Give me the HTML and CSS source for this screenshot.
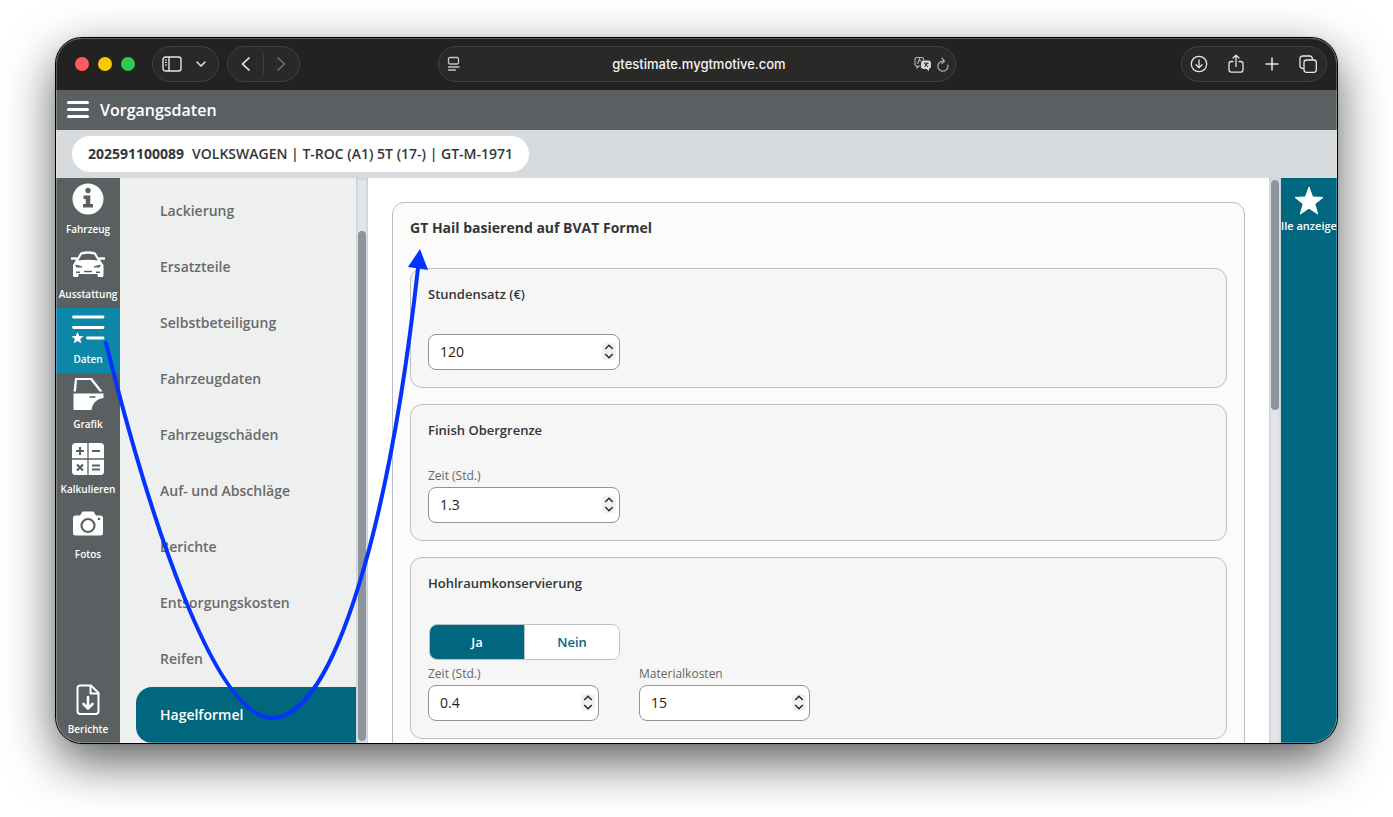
FILE: index.html
```html
<!DOCTYPE html>
<html lang="de">
<head>
  <meta charset="UTF-8">
  <meta name="viewport" content="width=device-width, initial-scale=1.0">
  <title>Vorgangsdaten</title>
  <link rel="stylesheet" href="styles.css">
</head>
<body>
  <div class="window">
    <div class="toolbar">
      <div class="toolbar-left">
        <div class="lights">
          <span class="light red"></span>
          <span class="light yellow"></span>
          <span class="light green"></span>
        </div>
        <div class="pill pill-sidebar">
          <button aria-label="Seitenleiste">
            <svg width="20" height="16" viewBox="0 0 20 16" fill="none" stroke="#e6e6e6" stroke-width="1.4"><rect x="1" y="1" width="18" height="14" rx="2.5"/><path d="M7 1v14"/><path d="M3 4h2M3 6.5h2M3 9h2" stroke-width="1"/></svg>
          </button>
          <button aria-label="Tabgruppen">
            <svg width="10" height="6" viewBox="0 0 10 6" fill="none" stroke="#e6e6e6" stroke-width="1.5" stroke-linecap="round" stroke-linejoin="round"><path d="M1 1l4 4 4-4"/></svg>
          </button>
        </div>
        <div class="pill pill-nav">
          <button aria-label="Zurück">
            <svg width="9" height="14" viewBox="0 0 9 14" fill="none" stroke="#f2f2f2" stroke-width="1.7" stroke-linecap="round" stroke-linejoin="round"><path d="M8 1L1.500 7 8 13"/></svg>
          </button>
          <span class="divider"></span>
          <button aria-label="Vor">
            <svg width="9" height="14" viewBox="0 0 9 14" fill="none" stroke="#6d6d6b" stroke-width="1.7" stroke-linecap="round" stroke-linejoin="round"><path d="M1 1l6.500 6L1 13"/></svg>
          </button>
        </div>
      </div>
      <div class="pill address">
        <svg width="14" height="16" viewBox="0 0 14 16" fill="none" stroke="#c8c8c8" stroke-width="1.3" stroke-linecap="round"><rect x="1.500" y="1.500" width="10" height="6.500" rx="1.500"/><path d="M1.500 11h10.500M1.500 14h7"/></svg>
        <span class="url">gtestimate.mygtmotive.com</span>
        <div class="address-icons">
          <svg width="18" height="16" viewBox="0 0 18 16"><path d="M2.500 1.500h5.500a1.500 1.500 0 0 1 1.500 1.500v1.500M6.500 10H5l-2 2v-2h-.5A1.500 1.500 0 0 1 1 8.500V3a1.500 1.500 0 0 1 1.500-1.500M3.500 8l2-5 1 2.300" fill="none" stroke="#b5b5b5" stroke-width="1.100"/><path d="M9.500 4.500h5A2.500 2.500 0 0 1 17 7v3.500a2.500 2.500 0 0 1-2 2.400v2.300L12.500 13h-3A2.500 2.500 0 0 1 7 10.500V7a2.500 2.500 0 0 1 2.500-2.500z" fill="#d5d5d5"/><path d="M10 7.200h4.500M10.500 11l3.500-4M10.500 7.500l3.500 3.500" fill="none" stroke="#292927" stroke-width="1"/></svg>
          <svg width="12" height="15" viewBox="0 0 12 15" fill="none" stroke="#a9a9a7" stroke-width="1.300" stroke-linecap="round" stroke-linejoin="round"><path d="M10.800 8.200A5 5 0 1 1 6 4.200h1M5 1.200l2.500 3L4.800 6.500"/></svg>
        </div>
      </div>
      <div class="toolbar-right">
        <div class="pill pill-actions">
          <button aria-label="Downloads">
            <svg width="18" height="18" viewBox="0 0 18 18" fill="none" stroke="#e6e6e6" stroke-width="1.300" stroke-linecap="round" stroke-linejoin="round"><circle cx="9" cy="9" r="7.700"/><path d="M9 5v7.500M6 9.800l3 2.900 3-2.900"/></svg>
          </button>
          <button aria-label="Teilen">
            <svg width="16" height="20" viewBox="0 0 16 20" fill="none" stroke="#e6e6e6" stroke-width="1.300" stroke-linecap="round" stroke-linejoin="round"><path d="M5 7.500H3.300A2.300 2.300 0 0 0 1 9.800v6A2.300 2.300 0 0 0 3.300 18.100h9.400a2.300 2.300 0 0 0 2.300-2.300v-6a2.300 2.300 0 0 0-2.300-2.300H11M8 12.500V1.200M5 4l3-2.900L11 4"/></svg>
          </button>
          <button aria-label="Neuer Tab">
            <svg width="14" height="14" viewBox="0 0 14 14" stroke="#e6e6e6" stroke-width="1.500" stroke-linecap="round"><path d="M7 1v12M1 7h12"/></svg>
          </button>
          <button aria-label="Tabübersicht">
            <svg width="18" height="18" viewBox="0 0 18 18" fill="none" stroke="#e6e6e6" stroke-width="1.300"><rect x="5" y="5" width="12.300" height="12.300" rx="2.500"/><path d="M5 13.300H3.500A2.500 2.500 0 0 1 1 10.800V3.500A2.500 2.500 0 0 1 3.500 1h7.300a2.500 2.500 0 0 1 2.500 2.500V5"/></svg>
          </button>
        </div>
      </div>
    </div>

    <header class="app-header">
      <button class="menu-btn" aria-label="Menü"><span></span><span></span><span></span></button>
      <h1>Vorgangsdaten</h1>
    </header>

    <div class="case-bar">
      <div class="case-pill"><strong>202591100089</strong><span>VOLKSWAGEN | T-ROC (A1) 5T (17-) | GT-M-1971</span></div>
    </div>

    <div class="layout">
      <nav class="rail">
        <a href="#">
          <svg width="32" height="32" viewBox="0 0 32 32"><circle cx="16" cy="16" r="15.500" fill="#fff"/><g fill="#5a6062"><circle cx="16" cy="7.500" r="2.700"/><path d="M11.500 12.500h6.800v8.500h2.700v3.500H11V21h2.700v-5h-2.200z"/></g></svg>
          Fahrzeug
        </a>
        <a href="#">
          <svg width="34" height="32" viewBox="0 0 34 32"><path d="M9.500 4.500Q17 2 24.500 4.500L29 12l3.500 5v10.500q0 1.500-1.500 1.500h-3q-1.500 0-1.500-1.500V26h-19v1.500Q7.500 29 6 29H3.500Q2 29 2 27.500V17l3-5z" fill="#fff"/><path d="M1 10.500h4M33 10.500h-4" stroke="#fff" stroke-width="2.600" stroke-linecap="round"/><g fill="#5a6062"><path d="M10.800 6.500q6.200-1.300 12.400 0l3.600 6Q17 10.800 7.200 12.500z"/><path d="M4 16.500l7 1.700v1.300H5.500zM30 16.500l-7 1.700v1.300h5.500zM13 22.700h8v1.500h-8zM5 23.500h4V25H5zM25 23.500h4V25h-4z"/></g></svg>
          Ausstattung
        </a>
        <a href="#" class="active">
          <svg width="34" height="32" viewBox="0 0 34 32"><path d="M2.500 4h29.500M2.500 14.500h29.500M16.500 25h15.500" stroke="#fff" stroke-width="2.800" stroke-linecap="round"/><path d="M6.500 19l1.700 4 4.300.3-3.300 2.800 1.100 4.200-3.800-2.300-3.800 2.300 1.100-4.200L.5 23.300l4.300-.3z" fill="#fff"/></svg>
          Daten
        </a>
        <a href="#">
          <svg width="32" height="34" viewBox="0 0 32 34"><path d="M3 0h17l10.500 13.500h-3L18.500 2H5L4 13.500H1.500z" fill="#fff"/><path d="M1.500 15.500h30V20c-7 1-11 5-12 12h-18z" fill="#fff"/><path d="M17.500 19h6" stroke="#5a6062" stroke-width="1.500"/></svg>
          Grafik
        </a>
        <a href="#">
          <svg width="34" height="34" viewBox="0 0 34 34"><rect x="1" y="0" width="32" height="32" rx="3.500" fill="#fff"/><path d="M17 0v32M1 16h32" stroke="#5a6062" stroke-width="1.300"/><path d="M9 4v8M5 8h8M21 8h8M21 22.500h8M21 26.500h8M6 21.500l6 6M12 21.500l-6 6" stroke="#5a6062" stroke-width="2.200"/></svg>
          Kalkulieren
        </a>
        <a href="#">
          <svg width="32" height="32" viewBox="0 0 32 32"><path d="M3.500 7.500H8l2.500-4h11l2.500 4h4.500Q31 7.500 31 10v15q0 2.500-2.500 2.500h-25Q1 27.500 1 25V10Q1 7.500 3.500 7.500z" fill="#fff"/><circle cx="16" cy="17.500" r="6.500" fill="none" stroke="#5a6062" stroke-width="2.200"/><circle cx="27" cy="11" r="1.300" fill="#5a6062"/></svg>
          Fotos
        </a>
        <a href="#" class="rail-bottom">
          <svg width="32" height="32" viewBox="0 0 32 32" fill="none" stroke="#fff" stroke-width="2" stroke-linecap="round" stroke-linejoin="round"><path d="M8 2.500h11l7.500 7.500v18q0 3-3 3h-15q-3 0-3-3V5q0-2.500 2.500-2.500z"/><path d="M18.500 3v7.500H26"/><path d="M16 14v11M11.500 21l4.500 4.500 4.500-4.500" stroke-width="2.600"/></svg>
          Berichte
        </a>
      </nav>

      <nav class="sections">
        <a href="#">Lackierung</a>
        <a href="#">Ersatzteile</a>
        <a href="#">Selbstbeteiligung</a>
        <a href="#">Fahrzeugdaten</a>
        <a href="#">Fahrzeugschäden</a>
        <a href="#">Auf- und Abschläge</a>
        <a href="#">Berichte</a>
        <a href="#">Entsorgungskosten</a>
        <a href="#">Reifen</a>
        <a href="#" class="active">Hagelformel</a>
      </nav>
      <div class="scrollbar scroll-end"><div class="thumb thumb-sections"></div></div>

      <main class="content">
        <section class="card">
          <h2>GT Hail basierend auf BVAT Formel</h2>

          <div class="box">
            <h3>Stundensatz (€)</h3>
            <div class="field">
              <input type="number" id="rate" value="120" aria-label="Stundensatz (€)">
              <svg class="stepper" width="14" height="17" viewBox="0 0 14 17"><rect width="14" height="17" rx="4" fill="#f1f1f1"/><path d="M3.200 6L7 2.200 10.800 6M3.200 11L7 14.800 10.800 11" fill="none" stroke="#2b2b2b" stroke-width="1.500"/></svg>
            </div>
          </div>

          <div class="box">
            <h3>Finish Obergrenze</h3>
            <label for="finish-time">Zeit (Std.)</label>
            <div class="field">
              <input type="number" id="finish-time" value="1.3" step="0.1">
              <svg class="stepper" width="14" height="17" viewBox="0 0 14 17"><rect width="14" height="17" rx="4" fill="#f1f1f1"/><path d="M3.200 6L7 2.200 10.800 6M3.200 11L7 14.800 10.800 11" fill="none" stroke="#2b2b2b" stroke-width="1.500"/></svg>
            </div>
          </div>

          <div class="box">
            <h3>Hohlraumkonservierung</h3>
            <div class="toggle">
              <button class="on">Ja</button>
              <button>Nein</button>
            </div>
            <div class="row">
              <div class="col">
                <label for="cavity-time">Zeit (Std.)</label>
                <div class="field">
                  <input type="number" id="cavity-time" value="0.4" step="0.1">
                  <svg class="stepper" width="14" height="17" viewBox="0 0 14 17"><rect width="14" height="17" rx="4" fill="#f1f1f1"/><path d="M3.200 6L7 2.200 10.800 6M3.200 11L7 14.800 10.800 11" fill="none" stroke="#2b2b2b" stroke-width="1.500"/></svg>
                </div>
              </div>
              <div class="col">
                <label for="material">Materialkosten</label>
                <div class="field">
                  <input type="number" id="material" value="15">
                  <svg class="stepper" width="14" height="17" viewBox="0 0 14 17"><rect width="14" height="17" rx="4" fill="#f1f1f1"/><path d="M3.200 6L7 2.200 10.800 6M3.200 11L7 14.800 10.800 11" fill="none" stroke="#2b2b2b" stroke-width="1.500"/></svg>
                </div>
              </div>
            </div>
          </div>
        </section>
      </main>
      <div class="scrollbar"><div class="thumb thumb-content"></div></div>

      <aside class="favorites">
        <a href="#">
          <svg width="30" height="30" viewBox="0 0 30 30"><path d="M15 1l3.600 10 10.400.4-8.200 6.500L23.700 28 15 22.200 6.300 28l2.900-10.100L1 11.400 11.400 11z" fill="#fff" stroke="#fff" stroke-linejoin="round"/></svg>
          <span>lle anzeige</span>
        </a>
      </aside>
    </div>

    <!-- arrow from "Daten" to the card title -->
    <svg class="arrow"><path d="M50 305C94 482 159 680 216 680C279 680 334 482 362 230" fill="none" stroke="#0433ff" stroke-width="4" stroke-linecap="round"/><path d="M364 211l8 21-20-3z" fill="#0433ff"/></svg>
  </div>
</body>
</html>
```
FILE: styles.css
```css
* {
  box-sizing: border-box;
}

body {
  margin: 0;
  padding: 38px 56px 74px;
  height: 100vh;
  background: #fff;
  font-family: "Open Sans", "Noto Sans", sans-serif;
  color: #333638;
  overflow: hidden;
}

button {
  font-family: inherit;
  cursor: pointer;
}

a {
  text-decoration: none;
}

.window {
  position: relative;
  display: flex;
  flex-direction: column;
  height: 100%;
  border-radius: 26px;
  box-shadow: 0 0 0 1px #000, 0 0 3px rgba(0, 0, 0, 0.3), 0 18px 50px rgba(0, 0, 0, 0.65);
  overflow: hidden;
}

.window::after {
  content: "";
  position: absolute;
  inset: 0;
  border: 1px solid rgba(255, 255, 255, 0.25);
  border-radius: 26px;
  pointer-events: none;
}

/* browser toolbar */
.toolbar {
  display: grid;
  grid-template-columns: 1fr 518px 1fr;
  align-items: center;
  flex: none;
  height: 52px;
  padding: 0 10px 0 19px;
  background: #222220;
}

.toolbar-left {
  display: flex;
  align-items: center;
}

.toolbar-right {
  display: flex;
  justify-content: flex-end;
}

.lights {
  display: flex;
  gap: 9px;
  margin-right: 17px;
}

.light {
  width: 14px;
  height: 14px;
  border-radius: 50%;
}

.red { background: #ff5a5f; }
.yellow { background: #fdc800; }
.green { background: #33c758; }

.pill {
  display: flex;
  align-items: center;
  height: 36px;
  border: 1px solid #40403e;
  border-radius: 18px;
  background: #292927;
}

.pill button {
  display: flex;
  padding: 0;
  border: none;
  background: none;
}

.pill-sidebar {
  width: 67px;
  padding: 0 12px 0 9px;
  justify-content: space-between;
  margin-right: 8px;
}

.pill-nav {
  width: 73px;
  padding: 0 13px;
  justify-content: space-between;
}

.divider {
  width: 1px;
  height: 20px;
  background: #40403e;
}

.address {
  justify-content: space-between;
  padding: 0 6px 0 8px;
  margin-left: -4px;
  margin-right: 4px;
}

.url {
  margin-left: 23px;
  font-family: Inter, sans-serif;
  font-size: 13px;
  font-weight: 500;
  color: #f4f4f4;
}

.address-icons {
  display: flex;
  align-items: center;
  gap: 5px;
}

.pill-actions {
  width: 146px;
  padding: 0 9px 0 8px;
  justify-content: space-between;
}

/* app header */
.app-header {
  display: flex;
  align-items: center;
  flex: none;
  gap: 11px;
  height: 40px;
  padding: 0 11px 1px;
  background: #5a6062;
}

.menu-btn {
  display: flex;
  flex-direction: column;
  gap: 4px;
  width: 22px;
  padding: 0;
  border: none;
  background: none;
}

.menu-btn span {
  height: 3px;
  border-radius: 2px;
  background: #fff;
}

h1 {
  margin: 0;
  font-size: 16px;
  font-weight: 600;
  color: #fff;
}

.case-bar {
  display: flex;
  align-items: center;
  flex: none;
  height: 48px;
  padding: 0 16px;
  background: #d7dbde;
}

.case-pill {
  display: flex;
  align-items: center;
  gap: 8px;
  height: 36px;
  padding: 0 16px 2px;
  border-radius: 18px;
  background: #fff;
  font-size: 14px;
  font-weight: 600;
}

.case-pill strong {
  font-weight: 700;
}

.layout {
  display: flex;
  flex: 1;
  min-height: 0;
}

/* icon rail */
.rail {
  display: flex;
  flex-direction: column;
  flex: none;
  width: 64px;
  background: #5a6062;
}

.rail a {
  display: flex;
  flex-direction: column;
  align-items: center;
  justify-content: space-between;
  height: 65px;
  padding: 5px 0 6px;
  font-size: 10px;
  font-weight: 600;
  line-height: 16px;
  color: #fff;
}

.rail a.active {
  background: #0d87a8;
}

.rail .rail-bottom {
  margin-top: auto;
}

/* section list */
.sections {
  display: flex;
  flex-direction: column;
  justify-content: flex-end;
  flex: none;
  width: 236px;
  padding-left: 16px;
  background: #eef0f0;
  overflow: hidden;
}

.sections a {
  flex: none;
  height: 56px;
  padding-left: 24px;
  font-size: 14px;
  font-weight: 600;
  line-height: 56px;
  color: #6a6a6a;
}

.sections a.active {
  border-radius: 16px 0 0 16px;
  background: #00677f;
  color: #fff;
}

.scrollbar {
  display: flex;
  flex-direction: column;
  flex: none;
  width: 12px;
  padding: 2px;
  background: #e3e6e9;
  box-shadow: inset 0 0 3px #a9aeb3;
}

.scroll-end {
  justify-content: flex-end;
}

.thumb {
  border-radius: 4px;
  background: #8d949b;
}

.thumb-sections {
  height: 91%;
}

.thumb-content {
  height: 41%;
}

/* form */
.content {
  flex: 1;
  min-width: 0;
  padding: 24px;
  background: #fff;
  overflow: hidden;
}

.card {
  padding: 17px;
  border: 1px solid #b7bfc6;
  border-radius: 12px;
  background: #fbfbfb;
}

h2 {
  margin: 0 0 32px;
  font-size: 14px;
  font-weight: 700;
  line-height: 16px;
}

.box {
  margin-bottom: 16px;
  padding: 17px;
  border: 1px solid #b7bfc6;
  border-radius: 12px;
  background: #f6f6f6;
}

h3 {
  margin: 0 0 32px;
  font-size: 13px;
  font-weight: 600;
  line-height: 16px;
}

label {
  display: block;
  margin-bottom: 5px;
  font-size: 12px;
  line-height: 12px;
  color: #666;
}

.field {
  position: relative;
  width: 192px;
}

.field input {
  display: block;
  width: 100%;
  height: 36px;
  padding: 0 11px 2px;
  border: 1px solid #949494;
  border-radius: 8px;
  background: #fff;
  font-family: inherit;
  font-size: 14px;
  color: #222;
  appearance: textfield;
}

.field input::-webkit-inner-spin-button {
  display: none;
}

.stepper {
  position: absolute;
  top: 9px;
  right: 4px;
  pointer-events: none;
}

.toggle {
  display: flex;
  width: 191px;
  height: 36px;
  margin: 33px 0 8px 1px;
  border: 1px solid #b7c1c7;
  border-radius: 8px;
  background: #fff;
  overflow: hidden;
}

.toggle button {
  flex: 1;
  border: none;
  background: #fff;
  font-size: 13px;
  font-weight: 600;
  color: #00677f;
}

.toggle .on {
  border-right: 1px solid #b7c1c7;
  background: #00677f;
  color: #fff;
}

.row {
  display: flex;
  gap: 40px;
}

.col .field {
  width: 171px;
}

/* right panel */
.favorites {
  flex: none;
  width: 56px;
  background: #00677f;
  overflow: hidden;
}

.favorites a {
  display: flex;
  flex-direction: column;
  align-items: center;
  padding-top: 8px;
  font-size: 11px;
  font-weight: 600;
  line-height: 16px;
  color: #fff;
  white-space: nowrap;
}

.favorites span {
  margin-top: 2px;
}

.arrow {
  position: absolute;
  top: 0;
  left: 0;
  width: 100%;
  height: 100%;
  pointer-events: none;
}
```
